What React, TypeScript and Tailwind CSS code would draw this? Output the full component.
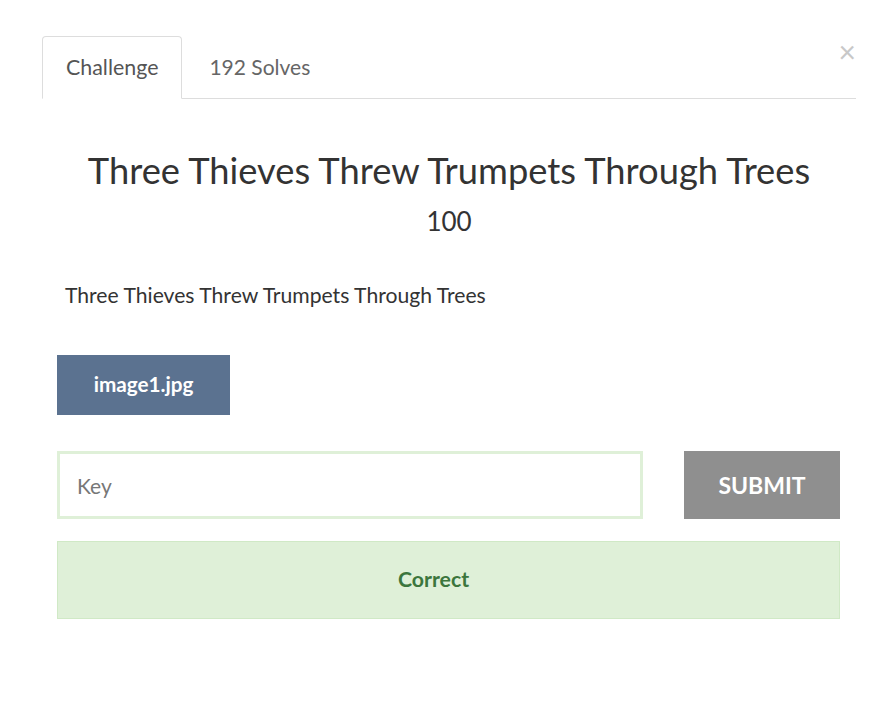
import { useState } from "react";

export default function App() {
    const [key, setKey] = useState("");

    return (
        <div className="min-h-[710px] w-[891px] bg-white font-['Lato','Noto_Sans',sans-serif] text-[#333]">
            <div className="relative pl-[42px] pr-[35px] pt-9">
                {/* Close */}
                <button className="absolute right-[35px] top-[36px] text-[30px] leading-none text-[#c8c8c8]">
                    ×
                </button>

                {/* Tabs */}
                <div className="flex border-b border-[#ddd]">
                    <div className="-mb-px flex h-[63px] items-center rounded-t border border-b-white border-[#ddd] px-[23px] text-[21.4px] text-[#555]">
                        Challenge
                    </div>
                    <div className="flex h-[62px] items-center px-[27px] text-[21px] text-[#666]">
                        192 Solves
                    </div>
                </div>

                {/* Header */}
                <div className="pt-[46px] text-center">
                    <h2 className="text-[36.3px] leading-[50px]">
                        Three Thieves Threw Trumpets Through Trees
                    </h2>
                    <h3 className="mt-[11px] text-[26px] leading-[30px]">100</h3>
                </div>

                <div className="w-[798px] pl-[15px]">
                    <p className="mt-[45px] pl-[8px] text-[21.15px] leading-[28px]">
                        Three Thieves Threw Trumpets Through Trees
                    </p>

                    <a className="mt-[46px] flex h-[60px] w-[173px] items-center justify-center bg-[#5b7290] text-[20.7px] font-bold text-white">
                        image1.jpg
                    </a>

                    {/* Submit row */}
                    <div className="mt-9 flex w-[783px] gap-[41px]">
                        <input
                            value={key}
                            onChange={(e) => setKey(e.target.value)}
                            placeholder="Key"
                            className="h-[68px] w-[586px] shrink-0 border-[3px] border-[#dff0d8] px-[17px] text-[21px] text-[#555] outline-none placeholder:text-[#777]"
                        />
                        <button className="h-[68px] w-[156px] shrink-0 bg-[#8f8f8f] text-[23px] font-bold text-white">
                            SUBMIT
                        </button>
                    </div>

                    {/* Result */}
                    <div className="mt-[22px] flex h-[78px] w-[783px] items-center justify-center border border-[#d0e9c6] bg-[#dff0d8] pr-[30px] text-[21.3px] font-bold text-[#3c763d]">
                        Correct
                    </div>
                </div>
            </div>
        </div>
    );
}
